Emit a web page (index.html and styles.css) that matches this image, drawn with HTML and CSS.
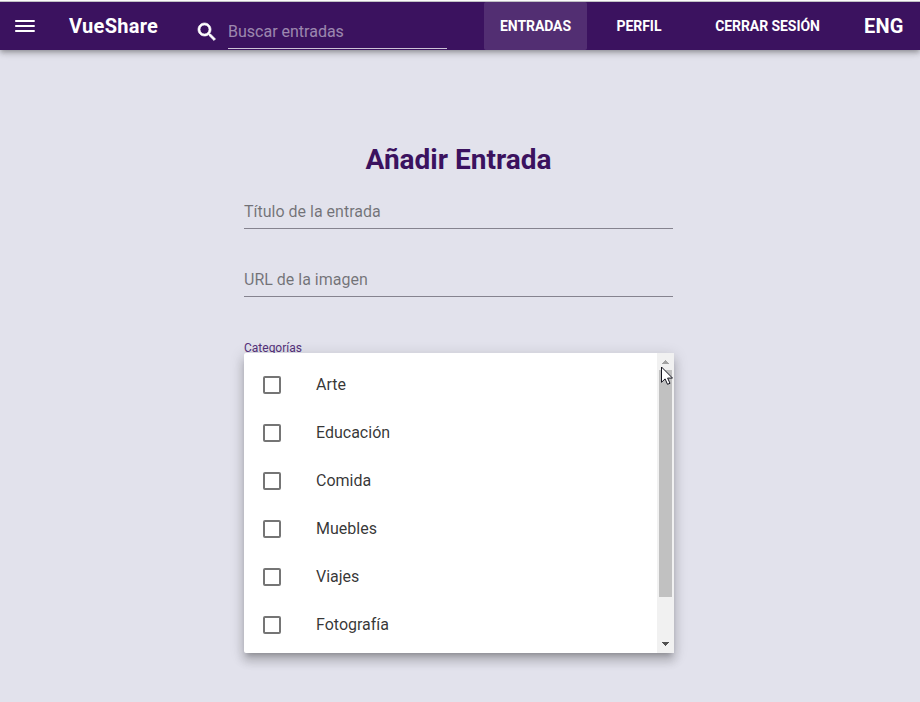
FILE: index.html
```
<!DOCTYPE html>
<html lang="es">
<head>
<meta charset="utf-8">
<title>VueShare</title>
<link rel="stylesheet" href="styles.css">
</head>
<body>
<header class="toolbar">
  <svg class="menu-icon" viewBox="0 0 26 26"><path d="M3.2 7h19.5v2H3.2zM3.2 12h19.5v2H3.2zM3.2 17h19.5v2H3.2z"/></svg>
  <h1 class="brand">VueShare</h1>
  <div class="search">
    <svg class="search-icon" viewBox="0 0 24 24"><path d="M15.5 14h-.79l-.28-.27C15.41 12.59 16 11.11 16 9.5 16 5.91 13.09 3 9.5 3S3 5.91 3 9.5 5.91 16 9.5 16c1.61 0 3.09-.59 4.23-1.57l.27.28v.79l5 4.99L20.49 19l-4.99-5zm-6 0C7.01 14 5 11.99 5 9.5S7.01 5 9.5 5 14 7.01 14 9.5 11.99 14 9.5 14z"/></svg>
    <div class="search-field">Buscar entradas</div>
  </div>
  <nav class="nav">
    <a class="nav-item active">ENTRADAS</a>
    <a class="nav-item profile">PERFIL</a>
    <a class="nav-item logout">CERRAR SESIÓN</a>
    <a class="lang">ENG</a>
  </nav>
</header>
<main class="form">
  <h2 class="title">Añadir Entrada</h2>
  <div class="field">Título de la entrada</div>
  <div class="field">URL de la imagen</div>
  <div class="select">
    <label class="select-label">Categorías</label>
    <div class="menu">
      <ul class="options">
        <li class="option"><span class="box"></span>Arte</li>
        <li class="option"><span class="box"></span>Educación</li>
        <li class="option"><span class="box"></span>Comida</li>
        <li class="option"><span class="box"></span>Muebles</li>
        <li class="option"><span class="box"></span>Viajes</li>
        <li class="option"><span class="box"></span>Fotografía</li>
      </ul>
      <div class="scrollbar">
        <svg class="arrow" viewBox="0 0 17 17" shape-rendering="crispEdges"><path fill="#a3a3a3" d="M8 7h1v1h1v1h1v1h1v1H5v-1h1V9h1V8h1z"/></svg>
        <div class="thumb"></div>
        <svg class="arrow down" viewBox="0 0 17 17" shape-rendering="crispEdges"><path fill="#505050" d="M5 6h7v1h-1v1h-1v1H9v1H8V9H7V8H6V7H5z"/></svg>
      </div>
      <svg class="cursor" viewBox="0 0 12 19"><path fill="#fff" stroke="#15151f" d="M.5 1v15.3l3.6-3.4 2.4 5.4 2.5-1-2.4-5.2h4.9z"/></svg>
    </div>
  </div>
</main>
</body>
</html>
```
FILE: styles.css
```
* { box-sizing: border-box; }
body {
  margin: 0;
  height: 702px;
  overflow: hidden;
  background: #e2e2ec;
  color: rgba(0, 0, 0, .8);
  font: 400 16px/24px Roboto, sans-serif;
}
svg { display: block; flex: none; }
h1, h2, ul { margin: 0; padding: 0; }
.toolbar {
  display: flex;
  height: 50px;
  padding-top: 2px;
  background: linear-gradient(#fbfbfb 1px, #c0c0c4 1px, #c0c0c4 2px, #3b125f 2px);
  color: #fff;
  box-shadow: 0 2px 4px -1px rgba(0,0,0,.2), 0 4px 5px rgba(0,0,0,.14), 0 1px 10px rgba(0,0,0,.12);
}
.toolbar svg { fill: #fff; }
.menu-icon { width: 26px; height: 26px; margin: 11px 0 0 12px; }
.brand {
  width: 128px;
  margin-left: 31px;
  font-size: 20px;
  font-weight: 700;
  line-height: 48px;
  letter-spacing: .014em;
}
.search { display: flex; width: 287px; }
.search-icon { width: 24px; height: 24px; margin: 18px 9px 0 -2px; stroke: #fff; stroke-width: .7; }
.search-field {
  width: 219px;
  height: 47px;
  padding-top: 18px;
  border-bottom: 1px solid rgba(255,255,255,.75);
  color: rgba(255,255,255,.5);
}
.nav { display: flex; line-height: 49px; font-weight: 700; }
.nav-item { font-size: 14px; text-align: center; letter-spacing: -.005em; }
.active { width: 103px; border-radius: 2px; background: rgba(255,255,255,.12); }
.profile { width: 104px; }
.logout { width: 153px; }
.lang { margin-left: 20px; font-size: 20px; letter-spacing: .01em; }
.form { width: 429px; margin: 0 auto 0 244px; }
.title {
  padding-top: 94px;
  color: #3b125f;
  font-size: 28px;
  font-weight: 700;
  line-height: 32px;
  text-align: center;
}
.field {
  height: 29px;
  margin: 24px 0 39px;
  border-bottom: 1px solid #85838f;
  color: rgba(0,0,0,.5);
}
.field + .field { margin: 0 0 38px; }
.select { position: relative; padding-top: 3px; }
.select-label { display: block; height: 20px; color: #54307a; font-size: 12px; line-height: 20px; }
.menu {
  position: absolute;
  top: 18px;
  left: 0;
  display: flex;
  width: 430px;
  height: 300px;
  border-radius: 2px;
  background: #fff;
  box-shadow: 0 5px 5px -3px rgba(0,0,0,.2), 0 8px 10px 1px rgba(0,0,0,.14), 0 3px 14px 2px rgba(0,0,0,.12);
}
.options { flex: 1; padding-top: 8px; list-style: none; }
.option { display: flex; align-items: center; height: 48px; padding-left: 19px; }
.box {
  width: 18px;
  height: 18px;
  margin-right: 35px;
  border: 2px solid #757575;
  border-radius: 2px;
}
.scrollbar { display: flex; flex-direction: column; width: 17px; background: #f1f1f1; }
.arrow { width: 17px; height: 17px; }
.thumb { width: 13px; height: 227px; margin: 0 auto; background: #c1c1c1; }
.down { margin-top: auto; }
.cursor { position: absolute; top: 13px; left: 417px; width: 12px; height: 19px; }
```
